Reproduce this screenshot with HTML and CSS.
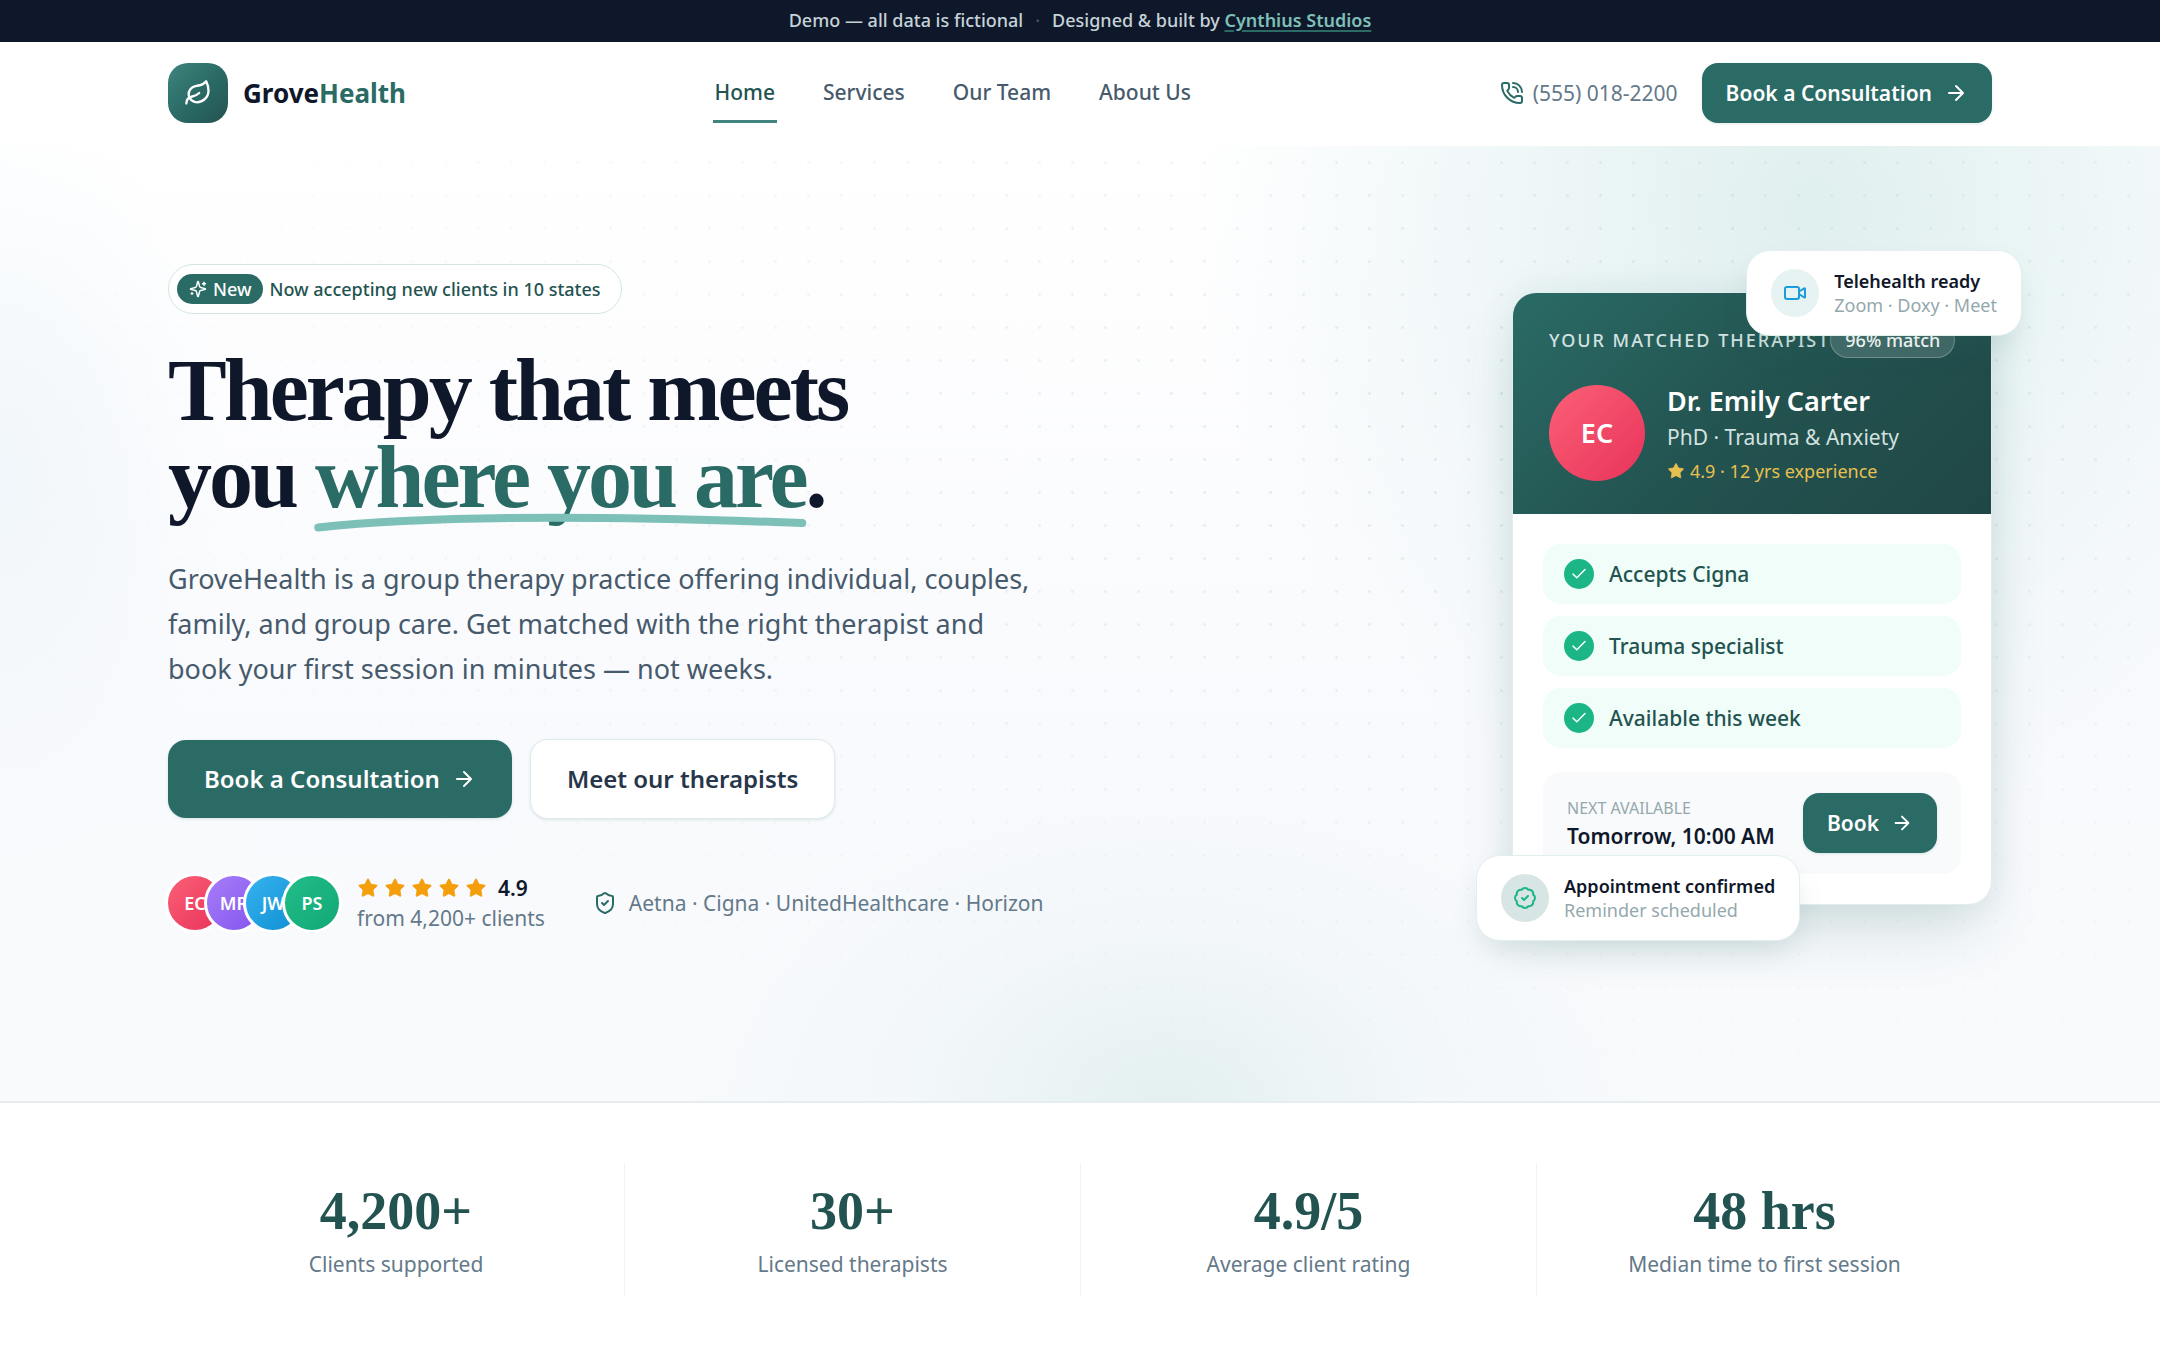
FILE: index.html
```html
<!DOCTYPE html>
<html lang="en">
<head>
    <meta charset="UTF-8">
    <meta name="viewport" content="width=device-width, initial-scale=1.0">
    <title>GroveHealth</title>
    <link rel="stylesheet" href="styles.css">
</head>
<body>
    <!-- Shared icons -->
    <svg class="sprite" aria-hidden="true">
        <symbol id="arrow" viewBox="0 0 24 24"><path d="M5 12h14M12 5l7 7-7 7"/></symbol>
        <symbol id="check" viewBox="0 0 24 24"><path d="M20 6 9 17l-5-5"/></symbol>
        <symbol id="star" viewBox="0 0 24 24"><path d="M11.525 2.295a.53.53 0 0 1 .95 0l2.31 4.679a2.123 2.123 0 0 0 1.595 1.16l5.166.756a.53.53 0 0 1 .294.904l-3.736 3.638a2.123 2.123 0 0 0-.611 1.878l.882 5.14a.53.53 0 0 1-.771.56l-4.618-2.428a2.122 2.122 0 0 0-1.973 0L6.396 21.01a.53.53 0 0 1-.77-.56l.881-5.139a2.122 2.122 0 0 0-.611-1.879L2.16 9.795a.53.53 0 0 1 .294-.906l5.165-.755a2.122 2.122 0 0 0 1.597-1.16z"/></symbol>
    </svg>

    <div class="demo-bar">
        <span>Demo — all data is fictional</span>
        <span class="demo-dot">·</span>
        <span>Designed &amp; built by <a href="#">Cynthius Studios</a></span>
    </div>

    <header class="header">
        <div class="container header-inner">
            <a class="logo" href="#">
                <span class="logo-mark">
                    <svg class="icon" viewBox="0 0 24 24"><path d="M11 20A7 7 0 0 1 9.8 6.1C15.5 5 17 4.48 19 2c1 2 2 4.18 2 8 0 5.5-4.78 10-10 10Z"/><path d="M2 21c0-3 1.85-5.36 5.08-6C9.5 14.52 12 13 13 12"/></svg>
                </span>
                <span>Grove<span class="logo-accent">Health</span></span>
            </a>
            <nav class="nav">
                <a class="active" href="#">Home</a>
                <a href="#">Services</a>
                <a href="#">Our Team</a>
                <a href="#">About Us</a>
            </nav>
            <div class="header-actions">
                <a class="phone" href="tel:5550182200">
                    <svg class="icon" viewBox="0 0 24 24"><path d="M13 2a9 9 0 0 1 9 9"/><path d="M13 6a5 5 0 0 1 5 5"/><path d="M13.832 16.568a1 1 0 0 0 1.213-.303l.355-.465A2 2 0 0 1 17 15h3a2 2 0 0 1 2 2v3a2 2 0 0 1-2 2A18 18 0 0 1 2 4a2 2 0 0 1 2-2h3a2 2 0 0 1 2 2v3a2 2 0 0 1-.8 1.6l-.468.351a1 1 0 0 0-.292 1.233 14 14 0 0 0 6.392 6.384"/></svg>
                    (555) 018-2200
                </a>
                <button class="btn">Book a Consultation <svg class="icon"><use href="#arrow"/></svg></button>
            </div>
        </div>
    </header>

    <main>
        <section class="hero">
            <div class="container hero-inner">
                <div class="hero-copy">
                    <div class="announce">
                        <span class="announce-tag">
                            <svg class="icon" viewBox="0 0 24 24"><path d="M9.937 15.5A2 2 0 0 0 8.5 14.063l-6.135-1.582a.5.5 0 0 1 0-.962L8.5 9.936A2 2 0 0 0 9.937 8.5l1.582-6.135a.5.5 0 0 1 .963 0L14.063 8.5A2 2 0 0 0 15.5 9.937l6.135 1.581a.5.5 0 0 1 0 .964L15.5 14.063a2 2 0 0 0-1.437 1.437l-1.582 6.135a.5.5 0 0 1-.963 0z"/><path d="M20 3v4M22 5h-4M4 17v2M5 18H3"/></svg>
                            New
                        </span>
                        Now accepting new clients in 10 states
                    </div>
                    <h1>Therapy that meets<br>you <span class="underlined">where you are<svg viewBox="0 0 300 12" preserveAspectRatio="none"><path d="M2 9C60 2 150 0 298 6"/></svg></span>.</h1>
                    <p class="lead">GroveHealth is a group therapy practice offering individual, couples, family, and group care. Get matched with the right therapist and book your first session in minutes — not weeks.</p>
                    <div class="hero-buttons">
                        <button class="btn btn-lg">Book a Consultation <svg class="icon"><use href="#arrow"/></svg></button>
                        <button class="btn btn-lg btn-outline">Meet our therapists</button>
                    </div>
                    <div class="trust">
                        <div class="clients">
                            <div class="avatars">
                                <span class="avatar rose">EC</span>
                                <span class="avatar violet">MR</span>
                                <span class="avatar sky">JW</span>
                                <span class="avatar green">PS</span>
                            </div>
                            <div>
                                <div class="rating">
                                    <svg class="star"><use href="#star"/></svg>
                                    <svg class="star"><use href="#star"/></svg>
                                    <svg class="star"><use href="#star"/></svg>
                                    <svg class="star"><use href="#star"/></svg>
                                    <svg class="star"><use href="#star"/></svg>
                                    <strong>4.9</strong>
                                </div>
                                <div class="rating-note">from 4,200+ clients</div>
                            </div>
                        </div>
                        <div class="insurers">
                            <svg class="icon" viewBox="0 0 24 24"><path d="M20 13c0 5-3.5 7.5-7.66 8.95a1 1 0 0 1-.67-.01C7.5 20.5 4 18 4 13V6a1 1 0 0 1 1-1c2 0 4.5-1.2 6.24-2.72a1.17 1.17 0 0 1 1.52 0C14.51 3.81 17 5 19 5a1 1 0 0 1 1 1z"/><path d="m9 12 2 2 4-4"/></svg>
                            Aetna · Cigna · UnitedHealthcare · Horizon
                        </div>
                    </div>
                </div>

                <div class="match">
                    <div class="match-card">
                        <div class="match-head">
                            <div class="match-top">
                                <span class="match-label">Your matched therapist</span>
                                <span class="match-score">96% match</span>
                            </div>
                            <div class="therapist">
                                <span class="avatar avatar-lg rose">EC</span>
                                <div>
                                    <div class="therapist-name">Dr. Emily Carter</div>
                                    <div class="therapist-role">PhD · Trauma &amp; Anxiety</div>
                                    <div class="therapist-exp"><svg class="star"><use href="#star"/></svg> 4.9 · 12 yrs experience</div>
                                </div>
                            </div>
                        </div>
                        <div class="match-body">
                            <ul class="features">
                                <li><span class="tick"><svg class="icon"><use href="#check"/></svg></span>Accepts Cigna</li>
                                <li><span class="tick"><svg class="icon"><use href="#check"/></svg></span>Trauma specialist</li>
                                <li><span class="tick"><svg class="icon"><use href="#check"/></svg></span>Available this week</li>
                            </ul>
                            <div class="slot">
                                <div>
                                    <div class="slot-label">Next available</div>
                                    <div class="slot-time">Tomorrow, 10:00 AM</div>
                                </div>
                                <button class="btn btn-book">Book <svg class="icon"><use href="#arrow"/></svg></button>
                            </div>
                        </div>
                    </div>
                    <div class="float float-top">
                        <span class="float-icon blue">
                            <svg class="icon" viewBox="0 0 24 24"><path d="m16 13 5.223 3.482a.5.5 0 0 0 .777-.416V7.87a.5.5 0 0 0-.752-.432L16 10.5"/><rect x="2" y="6" width="14" height="12" rx="2"/></svg>
                        </span>
                        <div>
                            <div class="float-title">Telehealth ready</div>
                            <div class="float-note">Zoom · Doxy · Meet</div>
                        </div>
                    </div>
                    <div class="float float-bottom">
                        <span class="float-icon mint">
                            <svg class="icon" viewBox="0 0 24 24"><path d="M3.85 8.62a4 4 0 0 1 4.78-4.77 4 4 0 0 1 6.74 0 4 4 0 0 1 4.78 4.78 4 4 0 0 1 0 6.74 4 4 0 0 1-4.77 4.78 4 4 0 0 1-6.75 0 4 4 0 0 1-4.78-4.77 4 4 0 0 1 0-6.76Z"/><path d="m9 12 2 2 4-4"/></svg>
                        </span>
                        <div>
                            <div class="float-title">Appointment confirmed</div>
                            <div class="float-note">Reminder scheduled</div>
                        </div>
                    </div>
                </div>
            </div>
        </section>

        <section class="stats">
            <div class="container stats-grid">
                <div class="stat"><div class="stat-value">4,200+</div><div class="stat-label">Clients supported</div></div>
                <div class="stat"><div class="stat-value">30+</div><div class="stat-label">Licensed therapists</div></div>
                <div class="stat"><div class="stat-value">4.9/5</div><div class="stat-label">Average client rating</div></div>
                <div class="stat"><div class="stat-value">48 hrs</div><div class="stat-label">Median time to first session</div></div>
            </div>
        </section>
    </main>
</body>
</html>
```
FILE: styles.css
```css
* {
    box-sizing: border-box;
}
body {
    margin: 0;
    font-family: "Noto Sans", sans-serif;
    font-size: 21px;
    line-height: 30px;
    color: #0f172a;
    background: #fff;
}
h1, p, ul {
    margin: 0;
    padding: 0;
}
a {
    color: inherit;
    text-decoration: none;
}
.sprite {
    position: absolute;
    width: 0;
    height: 0;
}
.icon {
    width: 24px;
    height: 24px;
    flex-shrink: 0;
    fill: none;
    stroke: currentColor;
    stroke-width: 2;
    stroke-linecap: round;
    stroke-linejoin: round;
}
.star {
    width: 22px;
    height: 22px;
    fill: #f59e0b;
    stroke: #f59e0b;
    stroke-width: 1;
}
.container {
    max-width: 1920px;
    margin: 0 auto;
    padding: 0 48px;
}

/* Top bar */
.demo-bar {
    display: flex;
    justify-content: center;
    gap: 12px;
    padding: 7px 24px 9px;
    font-size: 18px;
    line-height: 26px;
    font-weight: 500;
    color: #c5d3d8;
    background: #0f172a;
}
.demo-dot {
    color: #475569;
}
.demo-bar a {
    font-weight: 600;
    color: #7cc0b8;
    text-decoration: underline;
    text-decoration-color: #2a6b66;
    text-decoration-thickness: 2px;
    text-underline-offset: 3px;
}

/* Header */
.header {
    background: #fff;
    border-bottom: 2px solid #fff;
}
.header-inner {
    display: flex;
    align-items: center;
    justify-content: space-between;
    height: 102px;
}
.logo {
    display: flex;
    align-items: center;
    gap: 15px;
    font-size: 26px;
    font-weight: 700;
}
.logo-mark {
    display: flex;
    align-items: center;
    justify-content: center;
    width: 60px;
    height: 60px;
    border-radius: 20px;
    color: #fff;
    background: linear-gradient(135deg, #3f857d, #2a6b66 50%, #235350);
}
.logo-mark .icon {
    width: 28px;
    height: 28px;
}
.logo-accent {
    color: #2a6b66;
}
.nav {
    display: flex;
    gap: 44px;
    font-weight: 500;
    color: #475a6c;
}
.nav a {
    padding: 13px 2px;
    border-bottom: 3px solid transparent;
}
.nav .active {
    color: #235350;
    border-color: #3f857d;
}
.header-actions {
    display: flex;
    align-items: center;
    justify-content: flex-end;
    gap: 24px;
}
.phone {
    display: flex;
    align-items: center;
    gap: 9px;
    color: #647989;
}
.phone .icon {
    color: #2a6b66;
}

.btn {
    display: inline-flex;
    align-items: center;
    justify-content: center;
    gap: 12px;
    padding: 15px 24px;
    border: 0;
    border-radius: 16px;
    font-family: inherit;
    font-size: 21px;
    line-height: 30px;
    font-weight: 600;
    color: #fff;
    background: #2a6b66;
    box-shadow: 0 1px 3px rgba(42, 107, 102, 0.15);
}
.btn-lg {
    padding: 22px 36px;
    border-radius: 18px;
    font-size: 24px;
    line-height: 34px;
}
.btn-outline {
    color: #27364a;
    background: #fff;
    border: 1px solid #dfebec;
}
.btn-book .icon {
    width: 22px;
    height: 22px;
}

/* Hero */
.hero {
    background:
        radial-gradient(ellipse 620px 640px at 84% 60px, rgba(222, 239, 237, 0.95), rgba(232, 243, 245, 0.6) 55%, rgba(240, 246, 250, 0)),
        radial-gradient(ellipse 480px 330px at 54% 100%, rgba(224, 238, 238, 0.85), rgba(236, 244, 247, 0.5) 50%, rgba(240, 246, 250, 0)),
        radial-gradient(ellipse 230px 380px at 0 35%, rgba(240, 246, 250, 0.9), rgba(240, 246, 250, 0)),
        linear-gradient(#fff, #f9fafd 60%, #f8fafc);
    position: relative;
    border-bottom: 2px solid #e5edf0;
}
.hero::before {
    content: "";
    position: absolute;
    inset: 0;
    background: radial-gradient(circle, rgba(35, 83, 80, 0.1) 1px, transparent 2px) 0 0 / 33px 33px;
    -webkit-mask-image: radial-gradient(ellipse at 70% 30%, #000, transparent 75%);
    mask-image: radial-gradient(ellipse at 70% 30%, #000, transparent 75%);
}
.hero-inner {
    position: relative;
    display: flex;
    align-items: center;
    justify-content: space-between;
    padding-top: 118px;
    padding-bottom: 168px;
}
.hero-copy {
    max-width: 880px;
}
.announce {
    display: inline-flex;
    align-items: center;
    gap: 6px;
    padding: 9px 20px 9px 8px;
    border: 1px solid #d3e6e4;
    border-radius: 26px;
    font-size: 18px;
    font-weight: 500;
    color: #235350;
    background: #fff;
}
.announce-tag {
    display: flex;
    align-items: center;
    gap: 6px;
    padding: 0 12px;
    border-radius: 16px;
    color: #fff;
    background: #2a6b66;
}
.announce-tag .icon {
    width: 18px;
    height: 18px;
}
h1 {
    margin-top: 33px;
    font-family: "Liberation Serif", serif;
    font-size: 88px;
    line-height: 87px;
    letter-spacing: -3px;
}
.underlined {
    position: relative;
    color: #2a6b66;
}
.underlined svg {
    position: absolute;
    left: 0;
    bottom: -6px;
    width: 100%;
    height: 18px;
    overflow: visible;
    fill: none;
    stroke: #7cc0b8;
    stroke-width: 8;
    stroke-linecap: round;
}
.underlined path {
    vector-effect: non-scaling-stroke;
}
.lead {
    margin-top: 35px;
    font-size: 27px;
    line-height: 45px;
    color: #475a6c;
}
.hero-buttons {
    display: flex;
    align-items: center;
    gap: 18px;
    margin-top: 48px;
}
.trust {
    display: flex;
    align-items: center;
    gap: 48px;
    margin-top: 54px;
}
.clients {
    display: flex;
    align-items: center;
    gap: 15px;
}
.avatars {
    display: flex;
}
.avatar {
    display: flex;
    align-items: center;
    justify-content: center;
    width: 60px;
    height: 60px;
    margin-left: -21px;
    border: 3px solid #fff;
    border-radius: 50%;
    font-size: 18px;
    font-weight: 600;
    color: #fff;
}
.avatar:first-child {
    margin-left: -3px;
}
.rose {
    background: linear-gradient(135deg, #fb6076, #e8335a);
}
.violet {
    background: linear-gradient(135deg, #a77ef9, #8354ee);
}
.sky {
    background: linear-gradient(135deg, #36b3f0, #0f8fd2);
}
.green {
    background: linear-gradient(135deg, #22bd88, #12a876);
}
.rating {
    display: flex;
    align-items: center;
    gap: 5px;
}
.rating strong {
    margin-left: 6px;
    font-weight: 600;
}
.rating-note, .insurers {
    color: #647989;
}
.insurers {
    display: flex;
    align-items: center;
    gap: 12px;
}
.insurers .icon {
    color: #2a6b66;
}

/* Matched therapist card */
.match {
    position: relative;
    width: 480px;
}
.match-card {
    overflow: hidden;
    border: 1px solid #e2edee;
    border-radius: 24px;
    background: #fff;
    box-shadow: 0 32px 64px -12px rgba(42, 107, 102, 0.2), 0 0 36px rgba(42, 107, 102, 0.08);
}
.match-head {
    padding: 29px 36px 30px;
    color: #fff;
    background: linear-gradient(135deg, #2a6b66, #235350 50%, #1f4745);
}
.match-top {
    display: flex;
    align-items: center;
    justify-content: space-between;
    white-space: nowrap;
}
.match-label {
    font-size: 18px;
    font-weight: 500;
    letter-spacing: 2px;
    text-transform: uppercase;
    color: #d3e2e0;
}
.match-score {
    padding: 2px 14px;
    border: 1px solid rgba(255, 255, 255, 0.25);
    border-radius: 18px;
    font-size: 18px;
    font-weight: 500;
    background: rgba(255, 255, 255, 0.15);
}
.therapist {
    display: flex;
    align-items: center;
    gap: 22px;
    margin-top: 24px;
}
.avatar-lg {
    width: 96px;
    height: 96px;
    border: 0;
    font-size: 27px;
}
.therapist .avatar-lg {
    margin-left: 0;
}
.therapist-name {
    font-size: 27px;
    line-height: 38px;
    font-weight: 600;
}
.therapist-role {
    line-height: 34px;
    color: #d3e2e0;
}
.therapist-exp {
    display: flex;
    align-items: center;
    gap: 5px;
    margin-top: 4px;
    font-size: 18px;
    line-height: 26px;
    color: #e8c04f;
}
.therapist-exp .star {
    width: 18px;
    height: 18px;
    fill: #e8c04f;
    stroke: #e8c04f;
}
.match-body {
    padding: 30px;
}
.features {
    display: grid;
    gap: 12px;
    list-style: none;
}
.features li {
    display: flex;
    align-items: center;
    gap: 15px;
    padding: 15px 21px;
    border-radius: 18px;
    font-weight: 500;
    color: #235350;
    background: #f0fdf8;
}
.tick {
    display: flex;
    align-items: center;
    justify-content: center;
    width: 30px;
    height: 30px;
    border-radius: 50%;
    color: #fff;
    background: #1cb585;
}
.tick .icon {
    width: 18px;
    height: 18px;
}
.slot {
    display: flex;
    align-items: center;
    justify-content: space-between;
    margin-top: 24px;
    padding: 21px 24px;
    border-radius: 18px;
    background: #f8fafc;
}
.slot-label {
    font-size: 16px;
    line-height: 26px;
    text-transform: uppercase;
    color: #94a8ad;
}
.slot-time {
    font-weight: 600;
    white-space: nowrap;
}
.float {
    position: absolute;
    display: flex;
    align-items: center;
    gap: 15px;
    padding: 18px 24px;
    border: 1px solid #e2eff0;
    border-radius: 24px;
    font-size: 18px;
    line-height: 24px;
    white-space: nowrap;
    background: #fff;
    box-shadow: 0 16px 32px -8px rgba(42, 107, 102, 0.18);
}
.float-top {
    top: -42px;
    right: -30px;
}
.float-bottom {
    bottom: -36px;
    left: -36px;
}
.float-icon {
    display: flex;
    align-items: center;
    justify-content: center;
    width: 48px;
    height: 48px;
    border-radius: 50%;
}
.blue {
    color: #1a9bdc;
    background: #e7f2f3;
}
.mint {
    color: #1cb585;
    background: #d7e6e4;
}
.float-title {
    font-weight: 600;
}
.float-note {
    color: #94a8ad;
}

/* Stats */
.stats {
    padding: 60px 0;
}
.stats-grid {
    display: grid;
    grid-template-columns: repeat(4, 1fr);
    text-align: center;
}
.stat {
    padding: 18px 24px;
}
.stat + .stat {
    border-left: 1px solid #eef5f8;
}
.stat-value {
    font-family: "Liberation Serif", serif;
    font-size: 54px;
    line-height: 60px;
    font-weight: 700;
    color: #235350;
}
.stat-label {
    margin-top: 8px;
    color: #647989;
}
```
